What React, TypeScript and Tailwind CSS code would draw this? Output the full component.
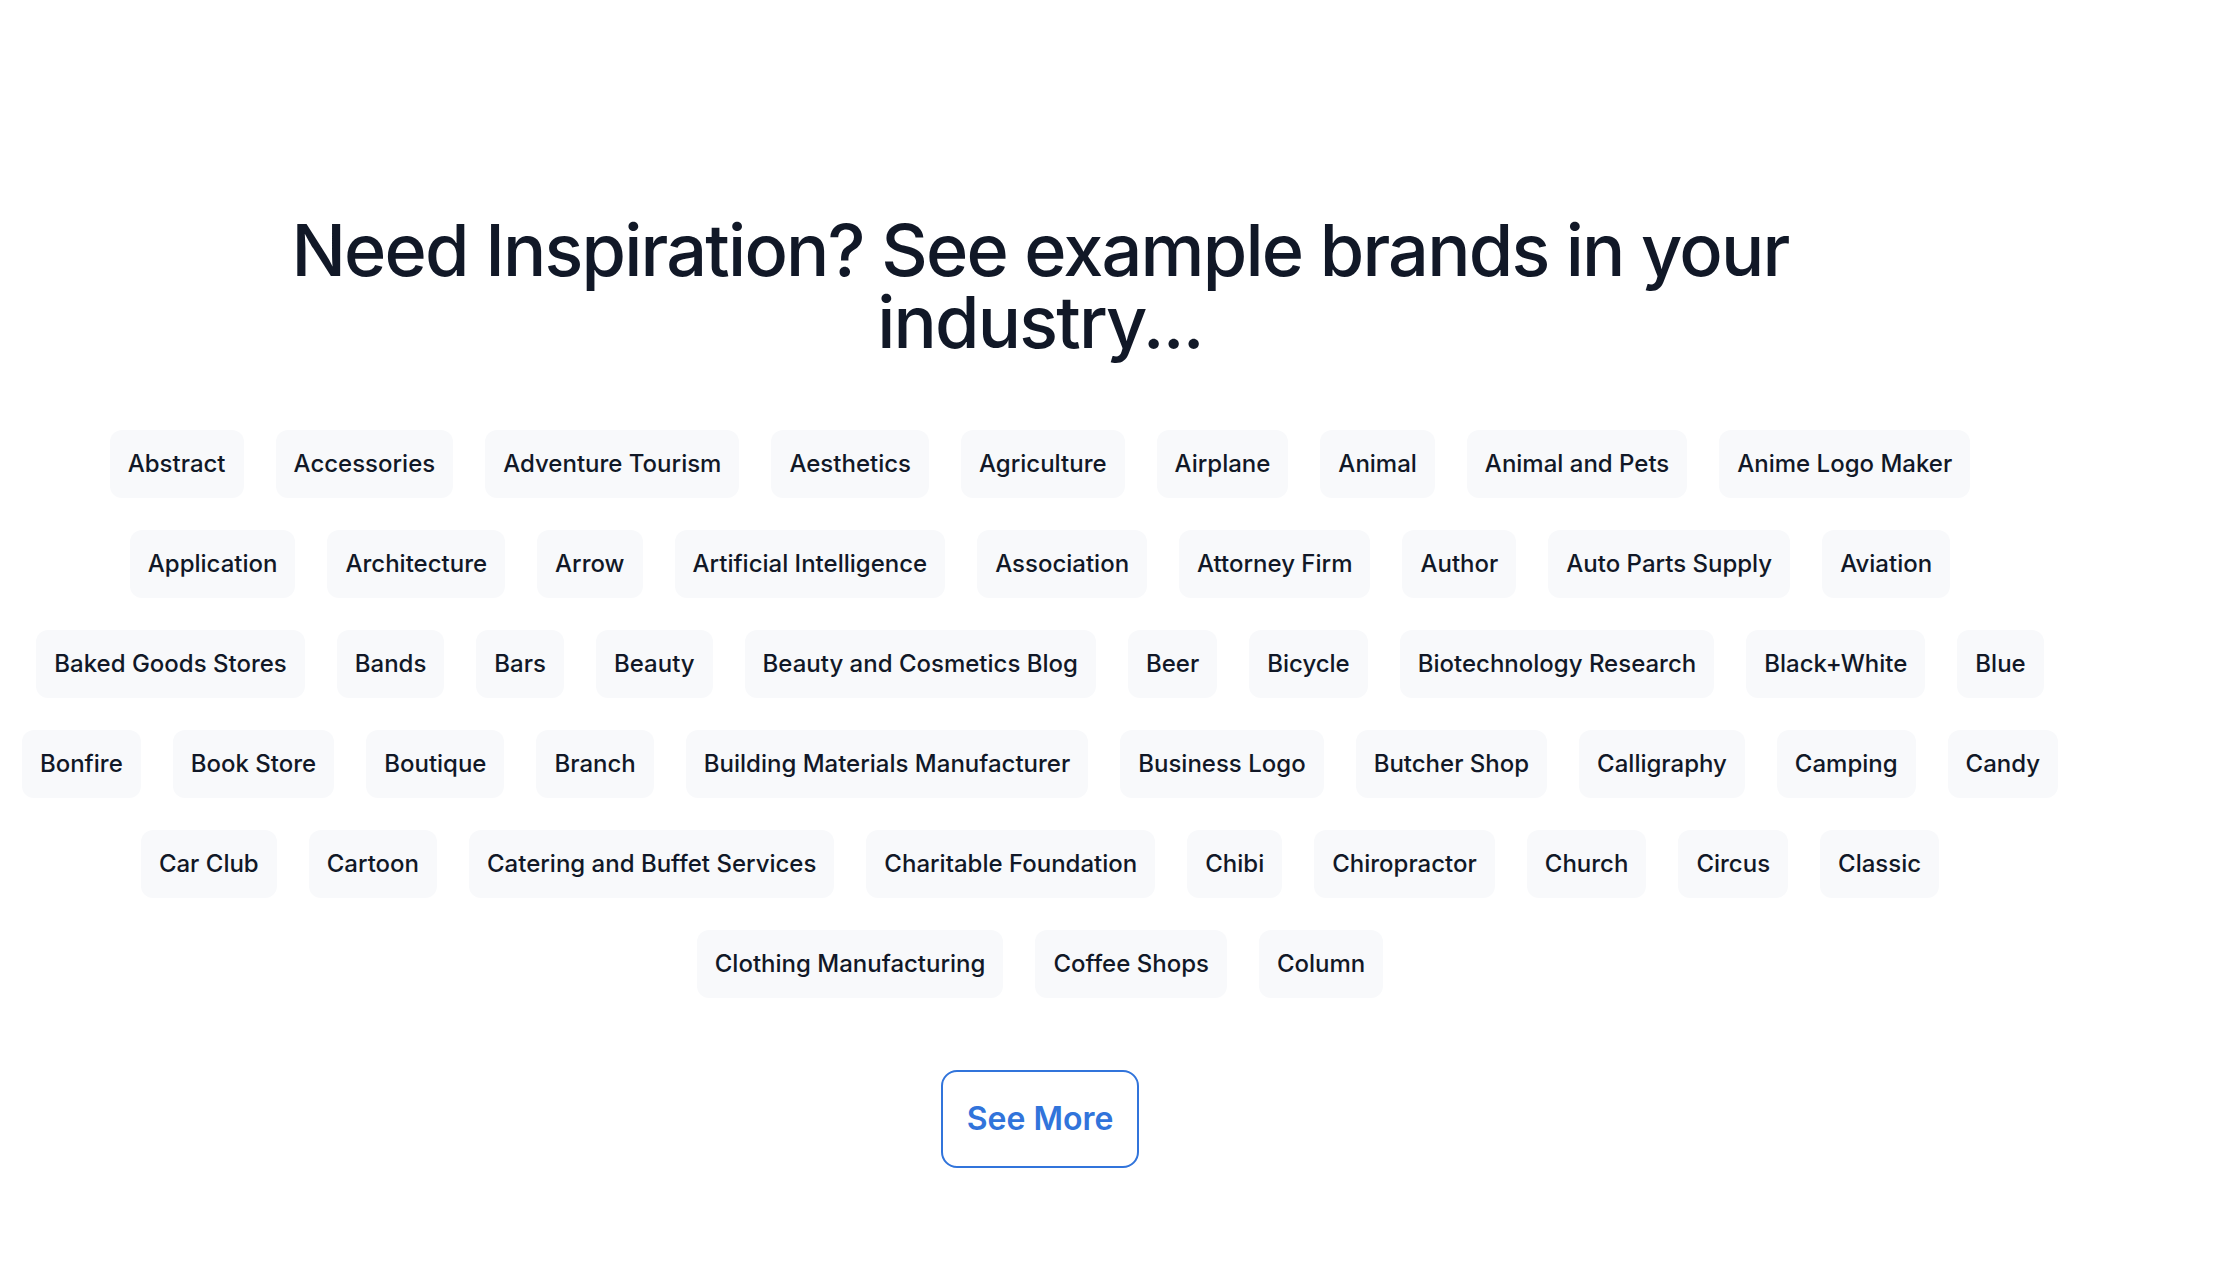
import React from 'react';

const INDUSTRIES = [
  'Abstract', 'Accessories', 'Adventure Tourism', 'Aesthetics', 'Agriculture', 'Airplane', 'Animal', 'Animal and Pets', 'Anime Logo Maker',
  'Application', 'Architecture', 'Arrow', 'Artificial Intelligence', 'Association', 'Attorney Firm', 'Author', 'Auto Parts Supply', 'Aviation',
  'Baked Goods Stores', 'Bands', 'Bars', 'Beauty', 'Beauty and Cosmetics Blog', 'Beer', 'Bicycle', 'Biotechnology Research', 'Black+White', 'Blue',
  'Bonfire', 'Book Store', 'Boutique', 'Branch', 'Building Materials Manufacturer', 'Business Logo', 'Butcher Shop', 'Calligraphy', 'Camping', 'Candy',
  'Car Club', 'Cartoon', 'Catering and Buffet Services', 'Charitable Foundation', 'Chibi', 'Chiropractor', 'Church', 'Circus', 'Classic',
  'Clothing Manufacturing', 'Coffee Shops', 'Column',
];

const App: React.FC = () => {
  return (
    <div className="min-h-screen bg-white font-['Inter',sans-serif] text-[#111827]">
      <section className="w-[2080px] px-5 pt-[214px] pb-24 flex flex-col items-center">
        <h1 className="max-w-[1600px] text-center text-[72px] leading-[72px] font-medium tracking-tight">
          Need Inspiration? See example brands in your industry...
        </h1>

        <div className="mt-[72px] flex flex-wrap justify-center gap-8">
          {INDUSTRIES.map((name) => (
            <a
              key={name}
              href="#"
              className="h-[68px] px-[18px] flex items-center rounded-xl bg-[#f8f9fb] text-[24px] font-medium whitespace-nowrap hover:bg-gray-100"
            >
              {name}
            </a>
          ))}
        </div>

        <button className="mt-[72px] h-[98px] px-6 rounded-2xl border-2 border-[#3174db] text-[32px] font-semibold text-[#3174db] hover:bg-blue-50">
          See More
        </button>
      </section>
    </div>
  );
};

export default App;
